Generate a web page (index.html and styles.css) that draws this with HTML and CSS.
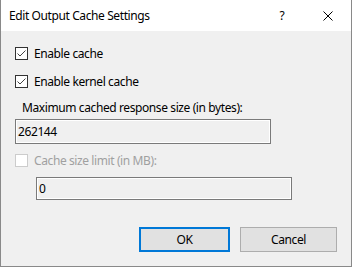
FILE: index.html
```html
<!DOCTYPE html>
<html>
<head>
<meta charset="utf-8">
<link rel="stylesheet" href="styles.css">
</head>
<body>
<div class="window">
  <div class="titlebar">
    <div class="title">Edit Output Cache Settings</div>
    <div class="tbtn help">?</div>
    <div class="tbtn close">
      <svg width="10" height="10" viewBox="0 0 10 10"><path d="M0.5 0.5 L9.5 9.5 M9.5 0.5 L0.5 9.5" stroke="#000" stroke-width="1" fill="none"/></svg>
    </div>
  </div>
  <div class="content">
    <div class="check-row row1">
      <span class="box"><svg width="11" height="11" viewBox="0 0 11 11"><path d="M1.5 5.5 L4 8 L9.5 2.5" stroke="#444" stroke-width="1" fill="none"/></svg></span>
      <span class="lbl">Enable cache</span>
    </div>
    <div class="check-row row2">
      <span class="box"><svg width="11" height="11" viewBox="0 0 11 11"><path d="M1.5 5.5 L4 8 L9.5 2.5" stroke="#444" stroke-width="1" fill="none"/></svg></span>
      <span class="lbl">Enable kernel cache</span>
    </div>
    <div class="field-label">Maximum cached response size (in bytes):</div>
    <div class="textbox tb1">262144</div>
    <div class="check-row row3 disabled">
      <span class="box"></span>
      <span class="lbl">Cache size limit (in MB):</span>
    </div>
    <div class="textbox tb2">0</div>
    <div class="buttons">
      <div class="btn ok">OK</div>
      <div class="btn cancel">Cancel</div>
    </div>
  </div>
</div>
</body>
</html>
```
FILE: styles.css
```css
html, body {
  margin: 0;
  padding: 0;
  background: #f0f0f0;
}
body {
  font-family: "Noto Sans", "Open Sans", sans-serif;
  font-size: 12px;
  letter-spacing: -0.4px;
  color: #000;
}
.window {
  width: 352px;
  height: 267px;
  box-sizing: border-box;
  border-left: 1px solid #898989;
  border-right: 1px solid #898989;
  border-bottom: 1px solid #898989;
  background: #f0f0f0;
  display: flex;
  flex-direction: column;
}
.titlebar {
  height: 31px;
  background: #fff;
  display: flex;
  align-items: center;
  flex: none;
}
.title {
  flex: 1;
  padding-left: 8px;
  line-height: 16px;
}
.tbtn {
  width: 46px;
  height: 31px;
  display: flex;
  align-items: center;
  justify-content: center;
}
.help {
  font-size: 12px;
}
.close svg {
  display: block;
}
.content {
  padding: 0 14px 0 14px;
  display: flex;
  flex-direction: column;
}
.check-row {
  height: 13px;
  display: flex;
  align-items: center;
}
.row1 { margin-top: 16px; }
.row2 { margin-top: 15px; }
.row3 { margin-top: 10px; }
.box {
  width: 13px;
  height: 13px;
  box-sizing: border-box;
  border: 1px solid #333;
  background: #fff;
  flex: none;
}
.box svg { display: block; }
.lbl {
  margin-left: 6px;
  line-height: 16px;
  white-space: nowrap;
}
.disabled .box {
  border-color: #cccccc;
}
.disabled .lbl {
  color: #a0a0a0;
}
.field-label {
  margin-top: 12px;
  padding-left: 7px;
  line-height: 16px;
}
.textbox {
  box-sizing: border-box;
  width: 256px;
  border: 1px solid #7a7a7a;
  box-shadow: inset 0 0 0 1px #fff;
  background: #f0f0f0;
  padding-left: 2px;
  display: flex;
  align-items: center;
}
.tb1 {
  margin-top: 3px;
  height: 25px;
}
.tb2 {
  margin-top: 10px;
  margin-left: 21px;
  height: 23px;
}
.buttons {
  margin-top: 27px;
  display: flex;
  justify-content: flex-end;
  gap: 10px;
}
.btn {
  height: 25px;
  box-sizing: border-box;
  background: #e1e1e1;
  border: 1px solid #adadad;
  display: flex;
  align-items: center;
  justify-content: center;
}
.ok {
  width: 91px;
  border: 2px solid #0078d7;
}
.cancel {
  width: 97px;
}
```
